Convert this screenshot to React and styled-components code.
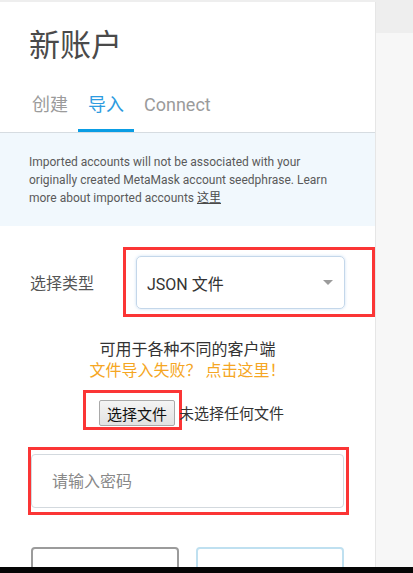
import React from 'react';
import styled, {createGlobalStyle} from 'styled-components';

const GlobalStyle = createGlobalStyle`
  html, body {
    margin: 0;
    padding: 0;
  }
  body {
    font-family: Roboto, "Noto Sans CJK SC", sans-serif;
    background: #f7f7f7;
  }
`;

const Page = styled.div`
  height: 573px;
  display: grid;
  grid-template-rows: 1fr 6px;
  background: linear-gradient(#eeeeee 0, #eeeeee 33px, #f7f7f7 33px);
`;

const Viewport = styled.div`
  overflow: hidden;
  padding-top: 2px;
`;

const BottomBar = styled.div`
  background: #050505;
`;

const Card = styled.div`
  width: 375px;
  height: 100%;
  background: #fff;
  box-shadow: 1px 0 0 #e6e6e6;
`;

const Title = styled.h1`
  margin: 0;
  padding: 26px 0 0 29px;
  height: 67px;
  box-sizing: border-box;
  font-size: 31px;
  line-height: 36px;
  font-weight: 400;
  color: #4a4a4a;
`;

const Tabs = styled.div`
  display: flex;
  padding-left: 22px;
  margin-top: 26px;
  border-bottom: 1px solid #d6dce1;
`;

const Tab = styled.div`
  padding: 0 10px 14px;
  font-size: 18px;
  line-height: 20px;
  color: ${props => props.$active ? '#2d9be0' : '#9b9b9b'};
  border-bottom: 3px solid ${props => props.$active ? '#0a9de4' : 'transparent'};
`;

const Notice = styled.p`
  margin: 0;
  background: #f1f8fd;
  padding: 20px 29px 19px;
  font-size: 12px;
  line-height: 18px;
  color: #5a5a5a;
`;

const NoticeLink = styled.u`
  color: #4a4a4a;
`;

const TypeRow = styled.div`
  display: flex;
  align-items: center;
  padding-left: 30px;
  margin-top: 21px;
`;

const Label = styled.span`
  width: 93px;
  font-size: 16px;
  color: #555;
`;

const Marked = styled.div`
  border: 3px solid #fb3535;
  padding: ${props => props.$pad};
  box-sizing: border-box;
`;

const Select = styled.div`
  width: 209px;
  height: 53px;
  box-sizing: border-box;
  display: flex;
  align-items: center;
  justify-content: space-between;
  padding: 0 11px 0 10px;
  border: 1px solid #c4d7ea;
  border-radius: 5px;
  box-shadow: 0 0 3px rgba(140, 185, 230, 0.45);
  font-size: 16px;
  color: #333;
`;

const Caret = styled.span`
  width: 0;
  height: 0;
  border-left: 5px solid transparent;
  border-right: 5px solid transparent;
  border-top: 5px solid #9b9b9b;
`;

const Hint = styled.div`
  margin-top: 22px;
  text-align: center;
  font-size: 16px;
  line-height: 21px;
  color: #333;
`;

const Warn = styled.div`
  color: #f5a623;
`;

const FileRow = styled.div`
  display: flex;
  align-items: flex-end;
  padding-left: 83px;
  margin-top: 9px;
`;

const FileButton = styled.button`
  width: 76px;
  height: 26px;
  padding: 0;
  font-family: "Noto Sans CJK SC", sans-serif;
  font-size: 15px;
  color: #111;
  background: linear-gradient(#f4f4f4, #e2e2e2);
  border: 1px solid #a9a9a9;
  border-radius: 2px;
`;

const FileName = styled.span`
  margin-left: -3px;
  margin-bottom: 6px;
  font-size: 15px;
  line-height: 20px;
  color: #333;
`;

const PasswordWrap = styled(Marked)`
  margin: 17px 0 0 28px;
  width: 321px;
`;

const Password = styled.input`
  display: block;
  width: 313px;
  height: 54px;
  box-sizing: border-box;
  padding: 0 20px;
  border: 1px solid #d3d9de;
  border-radius: 4px;
  font-family: Roboto, "Noto Sans CJK SC", sans-serif;
  font-size: 16px;
  outline: none;
  &::placeholder {
    color: #888;
  }
`;

const Actions = styled.div`
  display: flex;
  gap: 17px;
  padding-left: 31px;
  margin-top: 32px;
`;

const ActionButton = styled.button`
  width: 148px;
  height: 50px;
  background: #fff;
  border: 2px solid ${props => props.$primary ? '#bfe0f0' : '#9b9b9b'};
  border-radius: 4px;
`;

const App = () => {
    return (
        <>
            <GlobalStyle/>
            <Page>
                <Viewport>
                    <Card>
                        <Title>新账户</Title>
                        <Tabs>
                            <Tab>创建</Tab>
                            <Tab $active>导入</Tab>
                            <Tab>Connect</Tab>
                        </Tabs>
                        <Notice>
                            Imported accounts will not be associated with your originally created MetaMask account
                            seedphrase. Learn more about imported accounts <NoticeLink>这里</NoticeLink>
                        </Notice>
                        <TypeRow>
                            <Label>选择类型</Label>
                            <Marked $pad="6px 27px 5px 10px">
                                <Select>
                                    <span>JSON 文件</span>
                                    <Caret/>
                                </Select>
                            </Marked>
                        </TypeRow>
                        <Hint>
                            <div>可用于各种不同的客户端</div>
                            <Warn>文件导入失败？ 点击这里！</Warn>
                        </Hint>
                        <FileRow>
                            <Marked $pad="7px 4px 1px 13px">
                                <FileButton>选择文件</FileButton>
                            </Marked>
                            <FileName>未选择任何文件</FileName>
                        </FileRow>
                        <PasswordWrap $pad="4px 2px 4px 0">
                            <Password type="password" placeholder="请输入密码"/>
                        </PasswordWrap>
                        <Actions>
                            <ActionButton/>
                            <ActionButton $primary/>
                        </Actions>
                    </Card>
                </Viewport>
                <BottomBar/>
            </Page>
        </>
    );
};

export default App;
